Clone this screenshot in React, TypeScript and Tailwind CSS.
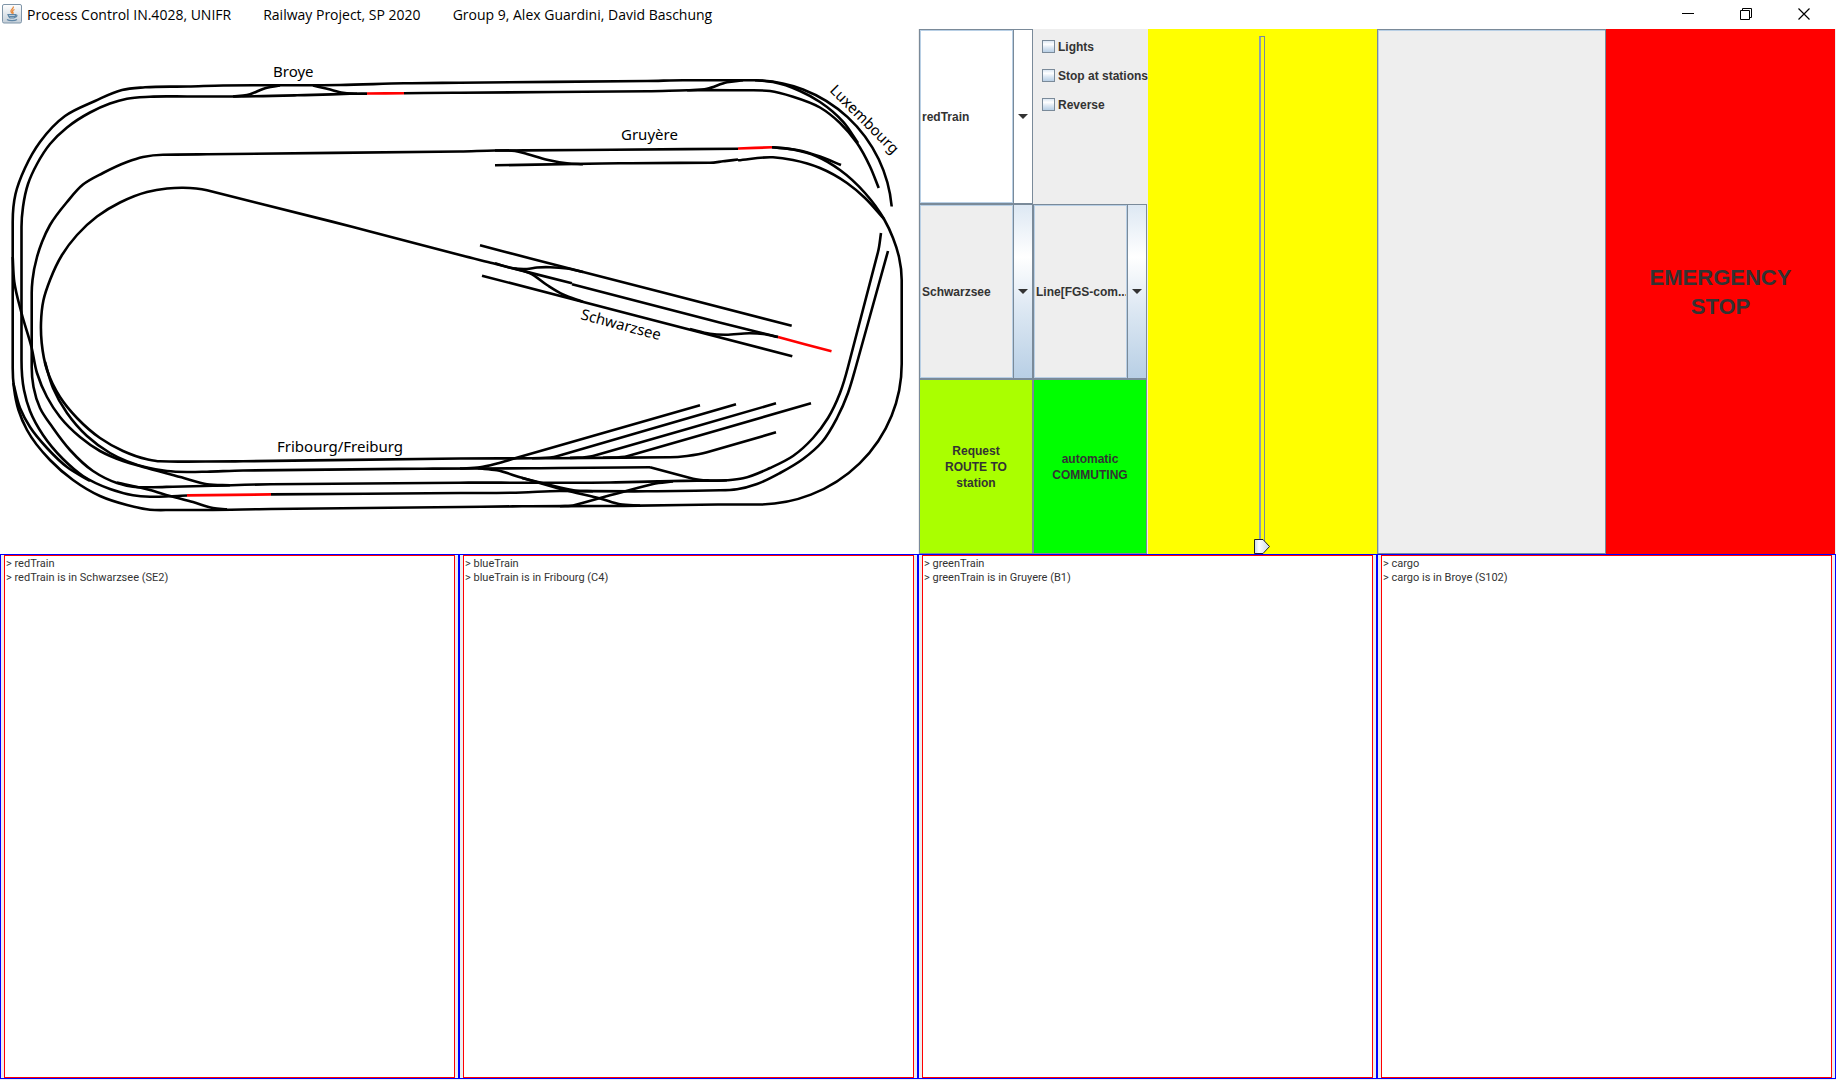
import { useState } from "react";

type Point = [number, number];

/*
 * Builds a smooth path through the points. Each inner point takes the tangent
 * of the circle through its neighbours; where a long straight meets a curve,
 * the straight's own direction is kept.
 */
function smooth(points: Point[]): string {
  const n = points.length;
  const segments = points.slice(1).map((q, i) => {
    const dx = q[0] - points[i][0];
    const dy = q[1] - points[i][1];
    const length = Math.hypot(dx, dy);
    return { x: dx / length, y: dy / length, length };
  });
  const tangents: Point[] = points.map((_, i) => {
    if (i === 0) return [segments[0].x, segments[0].y];
    if (i === n - 1) return [segments[n - 2].x, segments[n - 2].y];
    const a = segments[i - 1];
    const b = segments[i];
    if (a.length > 2 * b.length) return [a.x, a.y];
    if (b.length > 2 * a.length) return [b.x, b.y];
    const x = a.x * b.length + b.x * a.length;
    const y = a.y * b.length + b.y * a.length;
    const length = Math.hypot(x, y);
    return [x / length, y / length];
  });
  let d = `M${points[0][0]} ${points[0][1]}`;
  for (let i = 1; i < n; i++) {
    const p = points[i - 1];
    const q = points[i];
    const s = segments[i - 1].length / 3;
    const t = tangents[i - 1];
    const u = tangents[i];
    d += `C${p[0] + t[0] * s} ${p[1] + t[1] * s} ${q[0] - u[0] * s} ${q[1] - u[1] * s} ${q[0]} ${q[1]}`;
  }
  return d;
}

const tracks: Point[][] = [
  // Outer loop
  [[757, 80.2], [683, 80.2], [647, 81], [460, 82.7], [404, 83.3], [340, 85], [280, 85.3], [223, 85.5], [188, 86.5], [145, 87.3], [122, 90], [95, 101], [65, 116], [40, 142], [25, 168], [15.5, 194], [12.7, 222], [12.7, 368], [14, 388], [18.5, 410], [27, 430], [50, 460], [73, 480], [100, 496], [127, 505], [150, 509.7], [173, 510], [206, 510], [271, 509], [460, 507], [522, 506.3], [610, 506], [718, 504.5], [758, 504.5]],
  [[901.7, 364], [901.7, 280], [899, 257], [893, 238], [884, 219], [865, 193], [840, 170], [817, 156.5], [793, 149.5], [772, 147.3]],
  // Second loop
  [[404, 93.3], [460, 92.7], [647, 91.3], [687, 90.3], [753, 90.3], [770, 91], [793, 96.7], [820, 107.5], [840, 123], [857, 143], [870, 166.5], [878.7, 188]],
  [[367, 93.6], [350, 93.8], [297, 95.3], [233, 96.5], [188, 96.5], [150, 96.7], [127, 98.7], [110, 103.5], [90, 112.5], [67, 127.5], [50, 144], [37, 164], [28, 184], [23, 207], [21.5, 227], [21.5, 360], [24, 390], [30, 411], [43, 435], [63, 459], [83, 476], [110, 489], [133, 495.2], [150, 496.7], [170, 496.3], [187, 495.5]],
  [[271, 494.4], [460, 493], [522, 492.5], [560, 491], [647, 491.3], [720, 490.3], [737, 489.3], [757, 484], [780, 473], [803, 459], [822, 442], [837, 418], [848, 393], [855, 370], [888, 251]],
  // Gruyère line
  [[738, 148.7], [582, 150], [495, 150.5], [460, 151.5], [207, 154.3], [163, 154.7], [143, 157], [127, 162], [103, 173], [83, 184.5], [67, 202], [50, 225], [42, 242], [37, 257], [32.5, 280], [31.7, 293], [31.7, 367], [33.5, 387], [40, 408], [53, 428], [70, 450], [93, 471], [117, 483], [133, 486.7], [153, 487.2], [173, 486.7], [213, 485.7], [271, 484.3], [460, 482.7], [523, 482.7], [610, 482.5], [660, 481.3], [697, 480.7], [727, 480.3], [743, 478.3], [770, 468], [793, 456], [813, 438], [828, 418], [840, 393], [848, 367], [878, 252], [881, 233]],
  [[495, 165.3], [620, 163.3], [710, 162.7], [723, 161.3], [738, 159.5]],
  [[738, 160.3], [773, 157.3], [793, 160], [820, 168], [847, 183], [865, 198], [884, 219]],
  [[772, 147.3], [797, 150], [820, 156.5], [841, 165]],
  [[495, 150.5], [515, 151], [527, 154], [547, 159.7], [567, 163.3], [583, 164.3]],
  // Inner loop
  [[572, 283.3], [493, 263.3], [460, 255], [353, 227], [207, 190.3], [183, 187.7], [167, 188.5], [147, 192], [120, 202.5], [97, 216.5], [77, 235], [62, 255], [50, 280], [43.5, 300], [41, 323], [41.7, 343], [47, 370], [60, 397], [77, 418], [100, 438], [123, 451], [147, 459.3], [160, 461.3], [187, 461.6], [243, 461.3], [460, 458.5], [532, 458.3], [670, 457.3], [687, 456], [707, 452.3], [776, 432.3]],
  [[45, 362], [53, 388], [67, 413], [87, 436], [110, 453], [147, 467.5], [167, 471], [187, 472], [207, 471.7], [243, 470.5], [423, 468.7], [540, 468.2], [650, 467.3]],
  [[650, 467.3], [693, 478.7], [710, 480.5], [727, 480.3]],
  // Western crossovers
  [[12.7, 257], [14.3, 282], [21.5, 313], [31.7, 348], [37, 373], [47, 397], [60, 417], [80, 437], [100, 451], [123, 461], [147, 468], [187, 479], [207, 484.3], [230, 485.3]],
  [[13.3, 383], [20, 408], [30, 427], [47, 448], [67, 467], [90, 481]],
  [[117, 482.5], [150, 490], [170, 496], [193, 502], [213, 508], [227, 509.3]],
  // Broye and Luxembourg passing tracks
  [[233, 96.5], [247, 95], [267, 87.7], [280, 85.5]],
  [[313, 85.5], [328, 89], [343, 92.7], [357, 93.7]],
  [[687, 90.3], [707, 88.7], [727, 82.2], [743, 80.3]],
  [[757, 80.2], [773, 82], [800, 91], [820, 102], [843, 121.7], [858, 143]],
  // Schwarzsee
  [[480, 245.3], [549, 263.2], [791.7, 325.7]],
  [[482, 275.7], [792.3, 356.3]],
  [[572, 284.3], [710, 320], [778, 337]],
  [[495, 263.3], [513, 268.3], [527, 269], [537, 267.5], [550, 267.2], [567, 268.5], [583, 271.9]],
  [[515, 268.7], [530, 273.3], [547, 285], [563, 294.5], [583, 301.9]],
  [[690, 329], [710, 333.7], [725, 334.7], [750, 333.2], [763, 334], [778, 337]],
  // Fribourg yard
  [[460, 468.5], [480, 467.3], [497, 463.5], [515, 458.3], [700, 405.3]],
  [[532, 458.3], [557, 456.3], [736, 404.3]],
  [[570, 457.9], [593, 456], [776, 403.3]],
  [[603, 457.7], [628, 456], [811, 403.3]],
  [[478, 468.3], [497, 470.3], [520, 477.3], [557, 488], [600, 498.5], [620, 504.3], [640, 505.5]],
  [[522, 478], [560, 487.5], [575, 490.5], [593, 491.3]],
  [[560, 506.3], [575, 505], [610, 495.3], [653, 484], [673, 481.5]],
];

const arcs = [
  "M758 504.5A143.7 140.5 0 0 0 901.7 364",
  "M755 80.2A139 139 0 0 1 891.7 206.5",
];

const occupied: Point[][] = [
  [[367, 93.5], [404, 93.3]],
  [[738, 148.5], [772, 147.3]],
  [[778, 337], [831.5, 351.3]],
  [[187, 495.4], [271, 494.4]],
];

function TrackMap() {
  return (
    <svg viewBox="0 29 918 525" className="h-full w-full bg-white font-['Noto_Sans',sans-serif] text-[15px]" role="img" aria-label="Track map">
      <g fill="none" stroke="#000" strokeWidth="2.6">
        {tracks.map((t, i) => <path key={i} d={smooth(t)} />)}
        {arcs.map((d) => <path key={d} d={d} />)}
      </g>
      <g fill="none" stroke="#f00" strokeWidth="2.6">
        {occupied.map((t, i) => <path key={i} d={smooth(t)} />)}
      </g>
      <text x="273" y="77">Broye</text>
      <text x="621" y="140">Gruyère</text>
      <text x="277" y="452">Fribourg/Freiburg</text>
      <text transform="translate(580 319) rotate(15)">Schwarzsee</text>
      <text transform="translate(829 91) rotate(45)">Luxembourg</text>
    </svg>
  );
}

function JavaIcon() {
  return (
    <svg width="20" height="20" viewBox="0 0 20 20" aria-hidden="true">
      <defs>
        <linearGradient id="cup" x1="0" y1="0" x2="0" y2="1">
          <stop offset="0" stopColor="#fff" />
          <stop offset="1" stopColor="#c3ced8" />
        </linearGradient>
      </defs>
      <rect x="0.5" y="0.5" width="19" height="18.5" rx="1.5" fill="url(#cup)" stroke="#7f95a8" />
      <path d="M11.3 2.5c.8 2-3 2.800-2.300 5 .2.800.9 1.300 1 2M12.500 5.500c-2 .9-2.500 1.800-1.500 3 .4.600 0 1.200-.5 1.500" fill="none" stroke="#e8883a" strokeWidth="1.300" />
      <path d="M6 10.500h7.500c0 1.500-.5 3-1.500 3.500H8c-1-.5-1.500-2-2-3.500zM13.500 11c2-.5 2 2-.8 2.300" fill="none" stroke="#5f86a6" strokeWidth="1.200" />
      <path d="M7 12.500h6M5 15.500c2 1.500 8 1.500 10 0" fill="none" stroke="#5f86a6" strokeWidth="1.300" />
    </svg>
  );
}

const captionButton = "flex w-[58px] items-center justify-center";

function TitleBar() {
  return (
    <header className="flex h-[29px] items-center bg-white pr-[3px] pb-px pl-0.5 font-['Open_Sans',sans-serif] text-[14px] text-black">
      <JavaIcon />
      <h1 className="flex flex-1 gap-8 pl-[5px] whitespace-nowrap">
        <span>Process Control IN.4028, UNIFR</span>
        <span>Railway Project, SP 2020</span>
        <span>Group 9, Alex Guardini, David Baschung</span>
      </h1>
      <div className="flex h-full">
        <button className={captionButton} aria-label="Minimize">
          <svg width="12" height="12"><path d="M0 5.500h12" stroke="#000" /></svg>
        </button>
        <button className={captionButton} aria-label="Restore">
          <svg width="12" height="12"><path d="M.5 2.500h9v9h-9zM2.500 2.500v-2h9v9h-2" fill="none" stroke="#000" /></svg>
        </button>
        <button className={captionButton} aria-label="Close">
          <svg width="12" height="12"><path d="M.5.5l11 11M11.500.5l-11 11" stroke="#000" strokeWidth="1.200" /></svg>
        </button>
      </div>
    </header>
  );
}

function Combo({ label, value, light = false }: { label: string; value: string; light?: boolean }) {
  return (
    <div className={`relative border border-[#7a8a99] ${light ? "bg-white" : "bg-[#eee]"}`}>
      <select aria-label={label} className="h-full w-full appearance-none border border-[#b8cfe5] pr-4 pl-px font-bold">
        <option>{value}</option>
      </select>
      <span
        className={`pointer-events-none absolute inset-y-0 right-0 flex w-[19px] items-center justify-center border-l border-[#7a8a99] shadow-[-1px_0_#b8cfe5] ${
          light ? "bg-white" : "bg-[linear-gradient(#dde8f3,#fff_30%,#dde8f3_60%,#b8cfe5)]"
        }`}
      >
        <svg width="10" height="5"><path d="M0 0h10L5 5z" fill="#333" /></svg>
      </span>
    </div>
  );
}

function Option({ label }: { label: string }) {
  return (
    <label className="flex h-[29px] items-center gap-[3px] whitespace-nowrap">
      <input type="checkbox" className="size-[13px] shrink-0 appearance-none border border-[#7a8a99] bg-[linear-gradient(#dde8f3,#fff_30%,#dde8f3_60%,#b8cfe5)] checked:bg-[#7a8a99] checked:bg-none" />
      {label}
    </label>
  );
}

function SpeedSlider() {
  const [speed, setSpeed] = useState(0);
  return (
    <div className="relative flex justify-center bg-[#ff0] pt-[7px] pr-px pb-2">
      <div className="w-1.5 border border-l-2 border-[#7a8a99] border-l-[#8a9db0]" />
      <div className="pointer-events-none absolute top-0 right-px bottom-[15px] left-0">
        <svg
          width="16"
          height="15"
          className="absolute left-1/2 -ml-2"
          style={{ top: `${100 - speed}%` }}
          aria-hidden="true"
        >
          <defs>
            <linearGradient id="thumb">
              <stop offset="0" stopColor="#c8d8ea" />
              <stop offset="0.3" stopColor="#fff" />
              <stop offset="1" stopColor="#c8d8ea" />
            </linearGradient>
          </defs>
          <path d="M.5.5h8.500l6.500 7-6.500 7H.5z" fill="url(#thumb)" stroke="#222" />
        </svg>
      </div>
      <input
        type="range"
        aria-label="Speed"
        min={0}
        max={100}
        value={speed}
        onChange={(e) => setSpeed(Number(e.target.value))}
        className="absolute inset-y-0 left-1/2 -ml-2.5 h-full w-5 opacity-0 [direction:rtl] [writing-mode:vertical-lr]"
      />
    </div>
  );
}

function Controls() {
  return (
    <section className="grid grid-cols-4 bg-[#eee] px-px font-['Liberation_Sans',sans-serif] text-[12px] leading-4 font-bold text-[#333]">
      <div className="grid grid-cols-2 grid-rows-3 pr-px">
        <Combo label="Train" value="redTrain" light />
        <div className="pt-[3px] pl-[9px]">
          <Option label="Lights" />
          <Option label="Stop at stations" />
          <Option label="Reverse" />
        </div>
        <Combo label="Station" value="Schwarzsee" />
        <Combo label="Line" value="Line[FGS-com..." />
        <button className="border border-[#7a8a99] bg-[#af0]">
          Request
          <br />
          ROUTE TO
          <br />
          station
        </button>
        <button className="border border-[#7a8a99] bg-[#0f0]">
          automatic
          <br />
          COMMUTING
        </button>
      </div>
      <SpeedSlider />
      <div className="border border-[#7a8a99] shadow-[inset_1px_1px_#b8cfe5]" />
      <button className="bg-[#f00] text-[22px] leading-[29px]">
        EMERGENCY
        <br />
        STOP
      </button>
    </section>
  );
}

const logs = [
  ["redTrain", "redTrain is in Schwarzsee (SE2)"],
  ["blueTrain", "blueTrain is in Fribourg (C4)"],
  ["greenTrain", "greenTrain is in Gruyere (B1)"],
  ["cargo", "cargo is in Broye (S102)"],
];

export default function App() {
  return (
    <div className="flex min-h-screen flex-col bg-[#eee]">
      <TitleBar />
      <main className="grid flex-1 grid-rows-2 pb-px">
        <div className="grid grid-cols-2">
          <TrackMap />
          <Controls />
        </div>
        <div className="grid grid-cols-4">
          {logs.map((lines) => (
            <section key={lines[0]} className="grid border border-[#00f] px-[3px]">
              <div role="log" className="border border-[#f00] bg-white px-px pt-px font-[Roboto,sans-serif] text-[11px] leading-[14px] text-[#333]">
                {lines.map((line) => <p key={line}>&gt; {line}</p>)}
              </div>
            </section>
          ))}
        </div>
      </main>
    </div>
  );
}
